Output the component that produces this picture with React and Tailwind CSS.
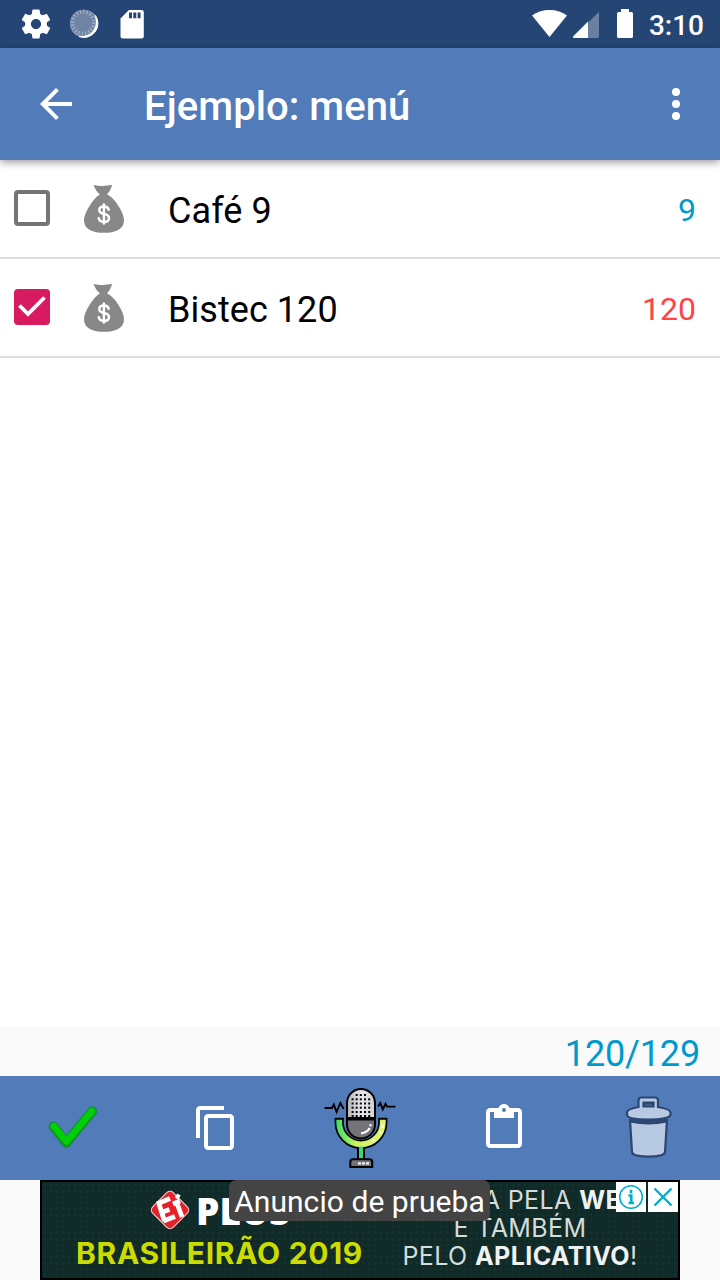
import React from "react";

function StatusBar() {
  return (
    <div className="flex h-12 shrink-0 items-center justify-between bg-[#254575] pl-4 pr-4 text-white">
      <div className="flex items-center gap-2">
        <svg className="size-10" viewBox="16 4 40 40" fill="currentColor">
          <path transform="translate(18.6 6.6) scale(1.45)" d="M19.43 12.98c.04-.32.07-.64.07-.98s-.03-.66-.07-.98l2.11-1.65c.19-.15.24-.42.12-.64l-2-3.46c-.12-.22-.39-.3-.61-.22l-2.49 1c-.52-.4-1.08-.73-1.69-.98l-.38-2.65A.488.488 0 0 0 14 2h-4c-.25 0-.46.18-.49.42l-.38 2.65c-.61.25-1.17.59-1.69.98l-2.49-1c-.23-.09-.49 0-.61.22l-2 3.46c-.13.22-.07.49.12.64l2.11 1.65c-.04.32-.07.65-.07.98s.03.66.07.98l-2.11 1.65c-.19.15-.24.42-.12.64l2 3.46c.12.22.39.3.61.22l2.49-1c.52.4 1.08.73 1.69.98l.38 2.65c.03.24.24.42.49.42h4c.25 0 .46-.18.49-.42l.38-2.65c.61-.25 1.17-.59 1.69-.98l2.49 1c.23.09.49 0 .61-.22l2-3.46c.12-.22.07-.49-.12-.64l-2.11-1.65zM12 15.5c-1.93 0-3.5-1.57-3.5-3.5s1.57-3.5 3.5-3.5 3.5 1.57 3.5 3.5-1.57 3.500-3.500 3.500z" />
        </svg>
        <svg className="size-10" viewBox="64 4 40 40">
          <circle cx="84" cy="23.700" r="14" fill="#8c9db7" />
          <path d="M95.500 15.500A14 14 0 0 1 79 36.500Q87 37.500 92 31.500Q97.500 24.500 95.500 15.500z" fill="#fff" stroke="#fff" strokeWidth="1" />
          <circle cx="83" cy="22.600" r="12.800" fill="#6f84a5" />
          <circle cx="83" cy="22.600" r="10.700" fill="none" stroke="#a9b6ca" strokeWidth="3.600" strokeDasharray="1.100 2.260" />
        </svg>
        <svg className="size-10" viewBox="112 4 40 40">
          <path d="M129 10h12.500q2.300 0 2.300 2.300v24q0 2.300-2.300 2.300h-18.700q-2.300 0-2.300-2.300V18.500z" fill="#fff" />
          <path d="M129 12.500h3v5.700h-3zM133.300 12.500h3v5.700h-3zM137.600 12.500h3v5.700h-3z" fill="#254575" />
        </svg>
      </div>
      <div className="flex items-center">
        <svg className="h-10 w-[110px]" viewBox="528 4 110 40" fill="#fff">
          <path d="M549.500 37L532 15.600Q539 10 549.500 10T567 15.600z" />
          <path d="M599 12v24.500q0 1.500-1.500 1.500H588V22.600z" fillOpacity=".32" />
          <path d="M588 21.500V38h-13.700q-2.300 0-.8-1.900z" />
          <path d="M621 9h8v3h2.500q1.500 0 1.500 1.500v23q0 1.500-1.500 1.500h-13q-1.500 0-1.500-1.500v-23q0-1.500 1.500-1.500h2.500z" />
        </svg>
        <span className="ml-[11px] pt-[4px] text-[28px] font-medium leading-none">3:10</span>
      </div>
    </div>
  );
}

function AppBar() {
  return (
    <header className="z-10 flex h-28 shrink-0 items-center bg-[#517bb9] pl-8 pr-5 text-white shadow-[0_2px_8px_rgba(0,0,0,0.42)]">
      <svg className="size-12" viewBox="0 0 24 24" fill="currentColor">
        <path d="M20 11H7.830l5.590-5.590L12 4l-8 8 8 8 1.410-1.410L7.830 13H20v-2z" />
      </svg>
      <h1 className="ml-16 grow pt-[6px] text-[40px] font-medium leading-none tracking-[0.06px]">Ejemplo: menú</h1>
      <svg className="size-12" viewBox="0 0 24 24" fill="currentColor">
        <circle cx="12" cy="6" r="2" />
        <circle cx="12" cy="12" r="2" />
        <circle cx="12" cy="18" r="2" />
      </svg>
    </header>
  );
}

function MoneyBag() {
  return (
    <svg className="mt-[2px] h-12 w-10" viewBox="84 185 40 48">
      <path d="M94 185q4.500 1.300 9 1t8.500-1q.8 0 .3 1.200-1.500 4.500-4.800 8.300c4 1.500 8.500 6.500 11.500 11.500 3.500 5.500 5.500 10.500 5.500 14.500 0 9-9 12.300-20 12.300S84 229.500 84 220.500c0-4 2-9 5.500-14.500 3-5 6.500-9.500 10.300-11.500q-4-3.500-5.800-8.300-.4-1.200 0-1.200z" fill="#888" />
      <path d="M108.700 209.800q-.8-3.200-4.800-3.200-4.600 0-4.600 3.500 0 3.100 4.700 3.900 5 .9 5 4.200 0 3.700-5 3.700-4.400 0-5.200-3.600M103.900 204.500v19" fill="none" stroke="#fff" strokeWidth="2.500" strokeLinecap="round" />
    </svg>
  );
}

function Item({ checked, name, amount, amountClass }) {
  return (
    <li className="flex h-[99px] items-center border-b-2 border-[#dfdfdf] pb-px pl-[14px] pr-6">
      {checked ? (
        <svg className="size-9" viewBox="0 0 36 36">
          <rect width="36" height="36" rx="4" fill="#d81b60" />
          <path d="M5.500 16.500l8.500 8.500L30.500 8.500" fill="none" stroke="#fff" strokeWidth="3.800" />
        </svg>
      ) : (
        <span className="size-9 rounded-[4px] border-4 border-[#757575]" />
      )}
      <span className="ml-[34px]"><MoneyBag /></span>
      <span className="ml-[44px] grow pt-[5px] text-[36px] leading-none tracking-[0.06px] text-black">{name}</span>
      <span className={"pt-[3px] text-[32px] leading-none " + amountClass}>{amount}</span>
    </li>
  );
}

function MicIcon() {
  const rows = [1099.300, 1103.500, 1107.700, 1112, 1116];
  const cols = [352.600, 356.700, 360.800, 365, 369.200];
  return (
    <svg className="size-20" viewBox="320 1088 80 80">
      <defs>
        <linearGradient id="cup" x1="336" x2="386" y1="0" y2="0" gradientUnits="userSpaceOnUse">
          <stop offset="0" stopColor="#3ddc6d" />
          <stop offset=".2" stopColor="#7de863" />
          <stop offset=".4" stopColor="#d2f262" />
          <stop offset="1" stopColor="#e0f56c" />
        </linearGradient>
        <linearGradient id="head" x1="347" x2="375" y1="0" y2="0" gradientUnits="userSpaceOnUse">
          <stop offset="0" stopColor="#b4b4b8" />
          <stop offset=".5" stopColor="#e6e6ea" />
          <stop offset="1" stopColor="#d0d0d4" />
        </linearGradient>
      </defs>
      <path d="M339.200 1117.800v4.700a21.800 21.800 0 0 0 43.600 0v-4.700" fill="none" stroke="#000" strokeWidth="9.200" />
      <path d="M339.200 1119.800v2.700a21.800 21.800 0 0 0 43.600 0v-2.700" fill="none" stroke="url(#cup)" strokeWidth="5.800" />
      <path d="M382.500 1124v4M381 1131.500l-1 2M375 1139.500l-3 2" stroke="#fff" strokeWidth="1.800" />
      <path d="M347 1118V1103a14 14 0 0 1 28 0v15z" fill="url(#head)" stroke="#000" strokeWidth="2" />
      <path d="M347 1119.500h28v5a14 14 0 0 1-28 0z" fill="#737379" stroke="#000" strokeWidth="2" />
      <path d="M361 1133.300q6-.5 8.700-5.300M370.500 1126.300v-2" fill="none" stroke="#fff" strokeWidth="2.200" />
      <path d="M355.700 1094h2v2h-2zM359.800 1094h2v2h-2zM364 1094h2v2h-2z" />
      {rows.map((y) => cols.map((x) => <rect key={x + "-" + y} x={x - 1} y={y - 1} width="2" height="2" />))}
      <path d="M357 1148h8v11h-8z" />
      <path d="M359 1146.500h4v12h-4z" fill="#3fd47b" />
      <path d="M350.300 1167v-5q0-2.700 2.700-2.700h16.500q2.700 0 2.700 2.700v5z" fill="#737379" stroke="#000" strokeWidth="2" />
      <path d="M358 1163.300h12" stroke="#f2f2f2" strokeWidth="2.200" strokeDasharray="3 1" />
      <path d="M324.500 1108h7.500l1.800-3.500 2.800 7.500 3.800-9 3.300 6M378 1106.500l2.300-3.500 2.500 6.300 2.700-5.500 1.500 2.800h8.500" fill="none" stroke="#000" strokeWidth="1.900" />
    </svg>
  );
}

function Toolbar() {
  return (
    <nav className="grid h-[104px] shrink-0 grid-cols-5 place-items-center bg-[#517bb9]">
      <svg className="h-12 w-14" viewBox="44 1104 56 48">
        <g fill="none" strokeLinecap="round" strokeLinejoin="round">
          <path d="M53.500 1126.500l12.700 16.500 26-31.500" stroke="#1d7a55" strokeWidth="10" opacity=".6" />
          <path d="M53.500 1126.500l12.900 16 25.800-31.500" stroke="#0a9c10" strokeWidth="9" />
          <path d="M54 1126.300l12.500 15.200 25.500-30.500" stroke="#00cf0a" strokeWidth="6.600" />
        </g>
      </svg>
      <svg className="size-12" viewBox="0 0 24 24" fill="#fff">
        <path d="M16 1H4c-1.100 0-2 .9-2 2v14h2V3h12V1zm3 4H8c-1.100 0-2 .9-2 2v14c0 1.100.9 2 2 2h11c1.100 0 2-.9 2-2V7c0-1.100-.9-2-2-2zm0 16H8V7h11v14z" />
      </svg>
      <MicIcon />
      <svg className="size-12" viewBox="0 0 24 24" fill="#fff">
        <path d="M19 2h-4.180C14.400.84 13.300 0 12 0c-1.300 0-2.400.84-2.820 2H5c-1.100 0-2 .9-2 2v16c0 1.100.9 2 2 2h14c1.100 0 2-.9 2-2V4c0-1.100-.9-2-2-2zm-7 0c.55 0 1 .45 1 1s-.45 1-1 1-1-.45-1-1 .45-1 1-1zm7 18H5V4h2v3h10V4h2v16z" />
      </svg>
      <svg className="h-16 w-12" viewBox="624 1096 48 64">
        <g fill="#b8c9e3" stroke="#2c4770" strokeWidth="2.200">
          <path d="M630 1120l2 32q.5 2.500 4 3.300 12.500 2.500 25 0 3.500-.8 4-3.300l2-32z" />
          <path d="M630.500 1120.500q18 4 36 0" fill="none" strokeWidth="4" />
          <path fillRule="evenodd" d="M638.500 1107v-6.500q0-3 3-3h13.500q3 0 3 3v6.500q12.500 2 12.500 5.500v2c0 3.500-10 5-22.200 5s-21.300-1.500-21.300-5v-2q0-3.500 11.500-5.500zM643.500 1106.500h10v-4h-10z" />
        </g>
        <path d="M643.500 1102.500h10v4h-10z" fill="#2c4770" />
        <path d="M645 1104h7v2h-7z" fill="#3a5b90" />
      </svg>
    </nav>
  );
}

function AdBanner() {
  return (
    <div className="flex h-[100px] shrink-0 justify-center bg-[#fafafa]">
      <div className="relative flex w-[640px] border-2 border-black bg-[#102a27] bg-[radial-gradient(#14312d_1px,transparent_2px)] bg-[length:6px_6px] pl-[34px]">
        <div className="w-[322px] shrink-0">
          <div className="flex h-[55px] items-center pl-[73px]">
            <svg className="size-[42px]" viewBox="0 0 42 42">
              <rect x="6.500" y="6.500" width="29" height="29" rx="4.500" transform="rotate(45 21 21)" fill="#e3222c" stroke="#f3c9cb" strokeWidth="1.200" />
              <path d="M21 9.500L8 15M10 15l5.500 17M11 24l9.500-3.500M14.500 32l11.500-4.500M27.500 13l5.500 15M27 6.500l3.500 2M24 15l7-3" fill="none" stroke="#fff" strokeWidth="4.800" />
            </svg>
            <span className="ml-[5px] pt-px font-['Open_Sans'] text-[37px] font-extrabold leading-none text-white">PLUS</span>
          </div>
          <div className="whitespace-nowrap pt-px font-['Inter'] text-[30px] font-bold leading-[30px] tracking-[0.7px] text-[#cddc00]">BRASILEIRÃO 2019</div>
        </div>
        <div className="flex w-[244px] flex-col items-center whitespace-nowrap pt-[4px] font-['Inter'] text-[25px] leading-7 tracking-[0.4px] text-[#d5dddb]">
          <div className="self-end pr-1">A PELA <b className="font-bold text-[#eef2f1]">WEB</b></div>
          <div>E TAMBÉM</div>
          <div>PELO <b className="font-bold text-[#eef2f1]">APLICATIVO</b>!</div>
        </div>
        <div className="absolute right-0 top-0 flex gap-[2px]">
          <svg className="size-[30px] bg-white" viewBox="0 0 30 30" fill="none" stroke="#00aecd">
            <circle cx="15" cy="15" r="11.300" strokeWidth="1.600" />
            <path d="M15 7.700v3.500M12.500 13.500H15.300v8M12.500 21h5.500" strokeWidth="2.600" />
          </svg>
          <svg className="size-[30px] bg-white" viewBox="0 0 30 30" fill="none" stroke="#00aecd">
            <path d="M6.500 6.500l17 17M23.500 6.500l-17 17" strokeWidth="2.400" />
          </svg>
        </div>
        <div className="absolute -top-[2px] left-[187px] flex h-[41px] w-[261px] items-center justify-center whitespace-nowrap rounded-[7px] bg-[#444] pt-[3px] text-[30px] leading-none tracking-[0.06px] text-white">Anuncio de prueba</div>
      </div>
    </div>
  );
}

export default function App() {
  return (
    <div className="flex h-[1280px] w-[720px] flex-col overflow-hidden bg-white font-['Roboto',sans-serif]">
      <StatusBar />
      <AppBar />
      <ul className="grow">
        <Item name="Café 9" amount="9" amountClass="text-[#0099cc]" />
        <Item checked name="Bistec 120" amount="120" amountClass="text-[#ff4444]" />
      </ul>
      <div className="flex h-[49px] shrink-0 items-center justify-end bg-[#fafafa] pr-5 pt-[4px] text-[36px] leading-none tracking-[-0.15px] text-[#0099cc]">120/129</div>
      <Toolbar />
      <AdBanner />
    </div>
  );
}
